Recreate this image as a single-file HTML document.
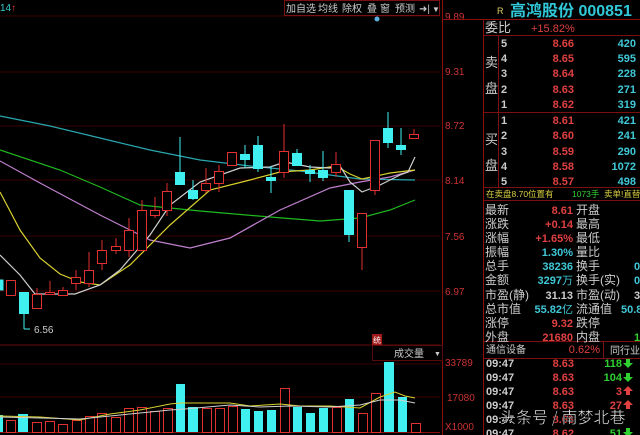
<!DOCTYPE html>
<html><head><meta charset="utf-8"><style>
html,body{margin:0;padding:0;background:#000;width:640px;height:435px;overflow:hidden}
svg{display:block}
text{font-family:"Liberation Sans","Noto Sans CJK SC",sans-serif}
.cj{font-family:"Noto Sans CJK SC","WenQuanYi Zen Hei",sans-serif}
</style></head><body>
<svg width="640" height="435" viewBox="0 0 640 435" xmlns="http://www.w3.org/2000/svg">
<rect width="640" height="435" fill="#000"/>
<g stroke="#3a0000" stroke-width="1">
<line x1="0" y1="16" x2="440" y2="16"/><line x1="0" y1="72" x2="440" y2="72"/>
<line x1="0" y1="126" x2="440" y2="126"/><line x1="0" y1="180" x2="440" y2="180"/>
<line x1="0" y1="236" x2="440" y2="236"/><line x1="0" y1="291" x2="440" y2="291"/>
<line x1="0" y1="397" x2="440" y2="397"/><line x1="0" y1="364" x2="440" y2="364"/>
</g>
<line x1="0" y1="345" x2="440" y2="345" stroke="#6a0a0a"/>
<line x1="0" y1="432.5" x2="440" y2="432.5" stroke="#8a1010"/>
<line x1="442.5" y1="0" x2="442.5" y2="435" stroke="#8a1010"/>
<line x1="483.5" y1="20" x2="483.5" y2="435" stroke="#8a1010"/>
<g class="cj" font-size="10" fill="#ccc">
<rect x="284.5" y="0.5" width="155" height="15" fill="none" stroke="#7a1010"/>
<text x="286" y="12">加自选</text><text x="318" y="12">均线</text><text x="342" y="12">除权</text>
<text x="367" y="12">叠</text><text x="380" y="12">窗</text><text x="395" y="12">预测</text>
<text x="419" y="12" font-size="10">➜|</text><text x="432" y="12" font-size="8">▼</text>
</g>
<circle cx="377" cy="19" r="2.5" fill="#5ab0e0"/>
<text x="0" y="11" font-size="10" fill="#3cc">14<tspan fill="#e33">↑</tspan></text>
<g font-size="10" fill="#c33">
<text x="445" y="20">9.89</text><text x="445" y="75">9.31</text><text x="445" y="129">8.72</text>
<text x="445" y="184">8.14</text><text x="445" y="240">7.56</text><text x="445" y="295">6.97</text>
<text x="445" y="366">33789</text><text x="447" y="401">17080</text><text x="445" y="430">X1000</text>
</g>
<g fill="none" stroke-width="1.2">
<polyline stroke="#2aa8b0" points="0,116 50,126 100,138 150,150 200,160 250,166 300,171 330,175 360,179 415,180"/>
<polyline stroke="#1fb81f" points="0,150 60,170 100,187 140,205 200,211 270,217 320,221 360,218 390,210 415,200"/>
<polyline stroke="#c080d0" points="0,161 40,183 100,215 150,240 190,248 230,238 280,210 330,188 360,182 390,177 415,170"/>
<polyline stroke="#d8d030" points="0,192 20,230 40,258 60,274 80,282 100,285 130,265 170,225 210,190 250,180 280,172 310,170 336,166 350,174 362,179 390,173 415,170"/>
<polyline stroke="#d0d0d0" points="0,255 20,275 35,294 75,294 100,285 120,270 150,235 170,205 200,182 240,168 270,167 285,162 310,167 330,168 340,166 350,182 362,192 380,185 400,175 408,172 415,157"/>
</g>
<g stroke-width="1">
<g stroke="#e03030" fill="#000">
<rect x="6.5" y="280.5" width="9" height="15"/>
<line x1="37" y1="288" x2="37" y2="294"/><rect x="32.5" y="294.5" width="9" height="14"/>
<line x1="50" y1="281" x2="50" y2="293"/><rect x="45.5" y="292.5" width="9" height="2"/>
<line x1="63" y1="287" x2="63" y2="290"/><rect x="58.5" y="290.5" width="9" height="5"/>
<line x1="76" y1="270" x2="76" y2="290"/><rect x="71.5" y="277.5" width="9" height="6"/>
<line x1="89" y1="252" x2="89" y2="287"/><rect x="84.5" y="270.5" width="9" height="13"/>
<line x1="102" y1="240" x2="102" y2="270"/><rect x="97.5" y="250.5" width="9" height="13"/>
<line x1="116" y1="238" x2="116" y2="254"/><rect x="111.5" y="246.5" width="9" height="4"/>
<line x1="129" y1="218" x2="129" y2="257"/><rect x="124.5" y="230.5" width="9" height="20"/>
<line x1="142" y1="200" x2="142" y2="250"/><rect x="137.5" y="210.5" width="9" height="40"/>
<line x1="155" y1="197" x2="155" y2="218"/><rect x="150.5" y="210.5" width="9" height="5"/>
<line x1="167" y1="183" x2="167" y2="216"/><rect x="162.5" y="191.5" width="9" height="19"/>
<line x1="206" y1="168" x2="206" y2="193"/><rect x="201.5" y="183.5" width="9" height="7"/>
<line x1="219" y1="165" x2="219" y2="192"/><rect x="214.5" y="171.5" width="9" height="12"/>
<rect x="227.5" y="152.5" width="9" height="13"/>
<line x1="284" y1="124" x2="284" y2="178"/><rect x="279.5" y="151.5" width="9" height="21"/>
<line x1="336" y1="152" x2="336" y2="177"/><rect x="331.5" y="164.5" width="9" height="8"/>
<line x1="362" y1="247" x2="362" y2="270"/><rect x="357.5" y="213.5" width="9" height="34"/>
<line x1="375" y1="190" x2="375" y2="195"/><rect x="370.5" y="140.5" width="9" height="50"/>
<line x1="414" y1="129" x2="414" y2="134"/><rect x="409.5" y="134.5" width="9" height="4"/>
</g>
<g stroke="#40f0f0" fill="#40f0f0">
<rect x="0" y="280" width="3" height="10"/>
<line x1="24" y1="313" x2="24" y2="329"/><line x1="24" y1="329" x2="30" y2="329"/><rect x="19.5" y="292.5" width="9" height="21"/>
<line x1="180" y1="137" x2="180" y2="185"/><rect x="175.5" y="172.5" width="9" height="12"/>
<line x1="193" y1="180" x2="193" y2="200"/><rect x="188.5" y="190.5" width="9" height="8"/>
<line x1="245" y1="145" x2="245" y2="168"/><rect x="240.5" y="154.5" width="9" height="5"/>
<line x1="258" y1="136" x2="258" y2="172"/><rect x="253.5" y="145.5" width="9" height="23"/>
<line x1="271" y1="166" x2="271" y2="193"/><rect x="266.5" y="177.5" width="9" height="3"/>
<line x1="297" y1="149" x2="297" y2="165"/><rect x="292.5" y="153.5" width="9" height="12"/>
<line x1="310" y1="165" x2="310" y2="182"/><rect x="305.5" y="170.5" width="9" height="3"/>
<line x1="323" y1="151" x2="323" y2="181"/><rect x="318.5" y="170.5" width="9" height="7"/>
<line x1="349" y1="234" x2="349" y2="242"/><rect x="344.5" y="190.5" width="9" height="44"/>
<line x1="388" y1="112" x2="388" y2="148"/><rect x="383.5" y="128.5" width="9" height="14"/>
<line x1="401" y1="128" x2="401" y2="155"/><rect x="396.5" y="145.5" width="9" height="4"/>
</g>
</g>
<text x="34" y="333" font-size="10" fill="#ccc">6.56</text>
<rect x="372" y="334" width="10" height="11" fill="#a01818"/>
<text x="373" y="343" font-size="8" fill="#fff" class="cj">统</text>
<rect x="372.5" y="345.5" width="70" height="15" fill="none" stroke="#5a0a0a"/>
<text x="394" y="357" font-size="10" fill="#ccc" class="cj">成交量</text>
<text x="434" y="356" font-size="7" fill="#ccc">▼</text>
<g stroke="#e03030" fill="#000">
<rect x="6.5" y="420.5" width="9" height="12"/><rect x="32.5" y="422.5" width="9" height="10"/>
<rect x="45.5" y="421.5" width="9" height="11"/><rect x="58.5" y="424.5" width="9" height="8"/>
<rect x="72.5" y="420.5" width="9" height="12"/><rect x="85.5" y="416.5" width="9" height="16"/>
<rect x="97.5" y="413.5" width="9" height="19"/><rect x="111.5" y="417.5" width="9" height="15"/>
<rect x="124.5" y="408.5" width="9" height="24"/><rect x="137.5" y="407.5" width="9" height="25"/>
<rect x="150.5" y="411.5" width="9" height="21"/><rect x="163.5" y="408.5" width="9" height="24"/>
<rect x="202.5" y="408.5" width="9" height="24"/><rect x="215.5" y="408.5" width="9" height="24"/>
<rect x="228.5" y="406.5" width="9" height="26"/><rect x="280.5" y="388.5" width="9" height="44"/>
<rect x="332.5" y="407.5" width="9" height="25"/><rect x="358.5" y="413.5" width="9" height="19"/>
<rect x="371.5" y="393.5" width="9" height="39"/><rect x="411.5" y="423.5" width="9" height="9"/>
</g>
<g fill="#40f0f0">
<rect x="0" y="415" width="3" height="17"/><rect x="18" y="414" width="10" height="18"/>
<rect x="176" y="384" width="9" height="48"/><rect x="188" y="407" width="10" height="25"/>
<rect x="241" y="409" width="9" height="23"/><rect x="254" y="411" width="9" height="21"/>
<rect x="267" y="410" width="9" height="22"/><rect x="293" y="407" width="9" height="25"/>
<rect x="306" y="413" width="9" height="19"/><rect x="319" y="408" width="9" height="24"/>
<rect x="345" y="399" width="9" height="33"/><rect x="384" y="362" width="10" height="70"/>
<rect x="398" y="397" width="9" height="35"/>
</g>
<g fill="none" stroke-width="1">
<polyline stroke="#d8d030" points="0,416 40,417 80,420 110,414 140,410 170,404 180,403 230,403 250,406 280,404 300,406 330,406 360,408 380,397 395,392 405,396 415,398"/>
<polyline stroke="#d0d0d0" points="0,417 40,418 80,419 110,416 140,413 170,410 185,409 230,405 260,407 290,406 330,407 360,405 380,400 400,400 415,403"/>
</g>
<text x="497" y="14" font-size="9" fill="#ddd060">R</text>
<text x="510" y="16" font-size="16" fill="#30c8d8" font-weight="bold">高鸿股份 000851</text>
<line x1="443" y1="19.5" x2="640" y2="19.5" stroke="#8a1010"/>
<g stroke="#7a1010"><line x1="484" y1="35.5" x2="640" y2="35.5"/><line x1="484" y1="112.5" x2="640" y2="112.5"/>
<line x1="484" y1="187.5" x2="640" y2="187.5"/><line x1="484" y1="200.5" x2="640" y2="200.5"/>
<line x1="484" y1="341.5" x2="640" y2="341.5"/><line x1="484" y1="358.5" x2="640" y2="358.5"/>
<line x1="498.5" y1="36" x2="498.5" y2="187"/><line x1="603.5" y1="342" x2="603.5" y2="358"/></g>
<g font-size="13" fill="#ccc" class="cj">
<text x="485" y="32">委比</text>
<text x="485" y="67">卖</text><text x="485" y="93">盘</text>
<text x="485" y="144">买</text><text x="485" y="170">盘</text>
</g>
<text x="531" y="32" font-size="11" fill="#e04040">+15.82%</text>
<g font-size="11" font-weight="bold">
<g fill="#ccc"><text x="501" y="47">5</text><text x="501" y="62">4</text><text x="501" y="77">3</text><text x="501" y="93">2</text><text x="501" y="108">1</text>
<text x="501" y="124">1</text><text x="501" y="139">2</text><text x="501" y="155">3</text><text x="501" y="170">4</text><text x="501" y="185">5</text></g>
<g fill="#e04040" text-anchor="end"><text x="574" y="47">8.66</text><text x="574" y="62">8.65</text><text x="574" y="77">8.64</text><text x="574" y="93">8.63</text><text x="574" y="108">8.62</text>
<text x="574" y="124">8.61</text><text x="574" y="139">8.60</text><text x="574" y="155">8.59</text><text x="574" y="170">8.58</text><text x="574" y="185">8.57</text></g>
<g fill="#40c8d8" text-anchor="end"><text x="636" y="47">420</text><text x="636" y="62">595</text><text x="636" y="77">228</text><text x="636" y="93">271</text><text x="636" y="108">319</text>
<text x="636" y="124">421</text><text x="636" y="139">241</text><text x="636" y="155">290</text><text x="636" y="170">1072</text><text x="636" y="185">498</text></g>
</g>
<g font-size="8.5" class="cj"><text x="486" y="197" fill="#d8d040">在卖盘8.70位置有</text><text x="572" y="197" fill="#30d030">1073手</text><text x="604" y="197" fill="#d8d040">卖单!直替</text></g>
<g font-size="12" fill="#ccc" class="cj">
<text x="485" y="214">最新</text><text x="485" y="228">涨跌</text><text x="485" y="242">涨幅</text><text x="485" y="256">振幅</text>
<text x="485" y="270">总手</text><text x="485" y="284">金额</text><text x="485" y="299">市盈(静)</text><text x="485" y="313">总市值</text>
<text x="485" y="327">涨停</text><text x="485" y="341">外盘</text>
<text x="576" y="214">开盘</text><text x="576" y="228">最高</text><text x="576" y="242">最低</text><text x="576" y="256">量比</text>
<text x="576" y="270">换手</text><text x="576" y="284">换手(实)</text><text x="576" y="299">市盈(动)</text><text x="576" y="313">流通值</text>
<text x="576" y="327">跌停</text><text x="576" y="341">内盘</text>
</g>
<g font-size="11" font-weight="bold" text-anchor="end">
<text x="573" y="214" fill="#e04040">8.61</text><text x="573" y="228" fill="#e04040">+0.14</text><text x="573" y="242" fill="#e04040">+1.65%</text>
<text x="573" y="256" fill="#40c8d8">1.30%</text><text x="573" y="270" fill="#40c8d8">38236</text><text x="562" y="284" fill="#40c8d8">3297</text>
<text x="573" y="299" fill="#ccc">31.13</text><text x="562" y="313" fill="#40c8d8">55.82</text><text x="573" y="327" fill="#e04040">9.32</text>
<text x="573" y="341" fill="#e04040">21680</text>
</g>
<g font-size="11" class="cj"><text x="562" y="284" fill="#40c8d8">万</text><text x="562" y="313" fill="#40c8d8">亿</text></g>
<g font-size="11" font-weight="bold"><text x="634" y="270" fill="#40c8d8">0</text><text x="634" y="284" fill="#40c8d8">0</text><text x="634" y="299" fill="#ccc">3</text><text x="621" y="313" fill="#40c8d8">50.8</text><text x="634" y="341" fill="#30d030">1</text></g>
<text x="486" y="353" font-size="10" fill="#ccc" class="cj">通信设备</text>
<text x="600" y="353" font-size="11" fill="#e04040" text-anchor="end">0.62%</text>
<text x="610" y="354" font-size="10" fill="#ccc" class="cj">同行业</text>
<g font-size="11" font-weight="bold">
<g fill="#ccc"><text x="486" y="367">09:47</text><text x="486" y="381">09:47</text><text x="486" y="395">09:47</text><text x="486" y="409">09:47</text><text x="486" y="423">09:47</text><text x="486" y="437">09:47</text></g>
<g fill="#e04040" text-anchor="end"><text x="574" y="367">8.63</text><text x="574" y="381">8.63</text><text x="574" y="395">8.63</text><text x="574" y="409">8.63</text><text x="574" y="423">8.63</text><text x="574" y="437">8.62</text></g>
<g text-anchor="end"><text x="622" y="367" fill="#30d030">118</text><text x="622" y="381" fill="#30d030">104</text><text x="622" y="395" fill="#e04040">3</text><text x="622" y="409" fill="#e04040">27</text><text x="622" y="437" fill="#30d030">51</text></g>
</g>
<g><path d="M626 359h4v4h3l-5 5-5-5h3z" fill="#30d030"/><path d="M626 373h4v4h3l-5 5-5-5h3z" fill="#30d030"/>
<path d="M628 386l5 5h-3v4h-4v-4h-3z" fill="#e04040"/><path d="M628 400l5 5h-3v4h-4v-4h-3z" fill="#e04040"/>
<path d="M626 428h4v4h3l-5 5-5-5h3z" fill="#30d030"/></g>
<text x="500" y="423" font-size="16" fill="#fff" class="cj" stroke="#000" stroke-width="0.5">头条号 / 南梦北巷</text>
</svg>
</body></html>
